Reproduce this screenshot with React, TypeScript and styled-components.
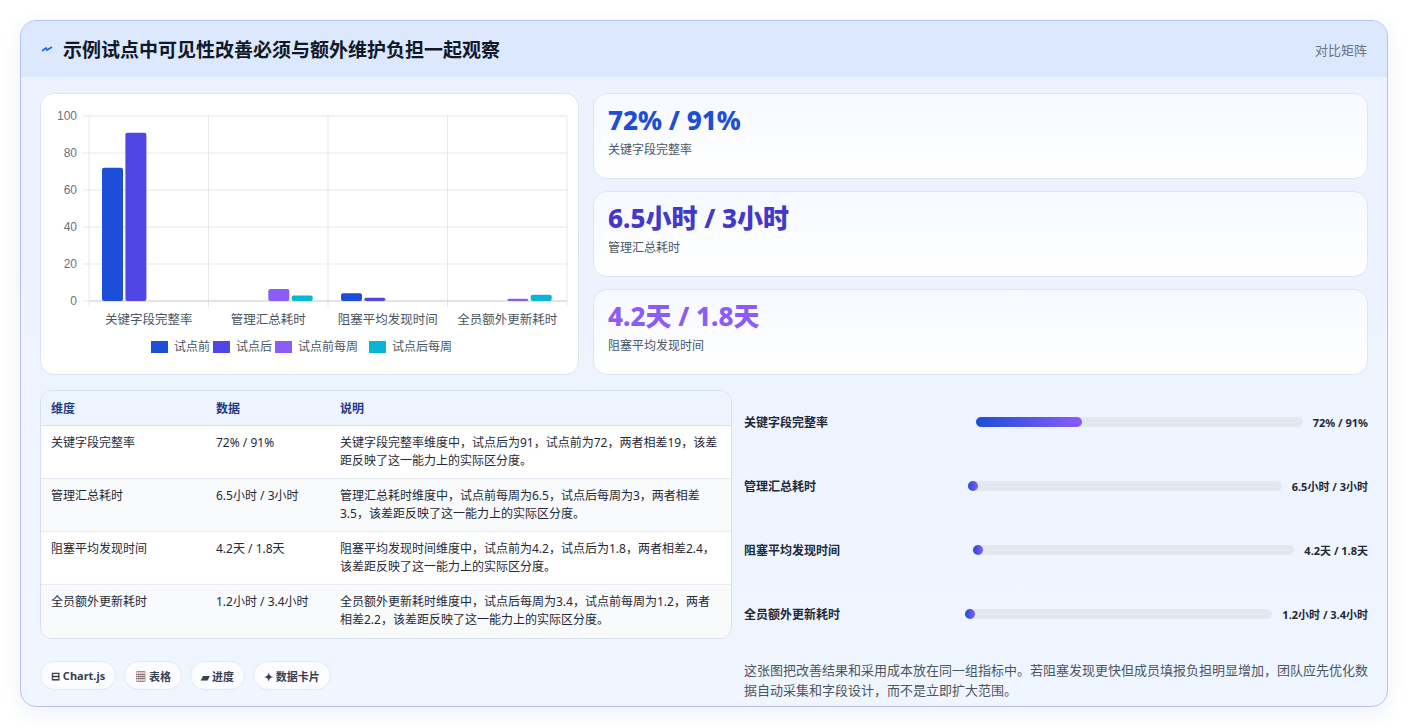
import React from "react";
import styled, { createGlobalStyle } from "styled-components";

const Global = createGlobalStyle`
  html, body { margin: 0; padding: 0; background: #ffffff; }
  body { font-family: "Noto Sans", "Noto Sans CJK SC", sans-serif; }
  * { box-sizing: border-box; }
`;

const Page = styled.div`
  padding: 20px 20px 21px 20px;
  height: 728px;
`;

const Card = styled.div`
  height: 687px;
  border: 1px solid #b6c2f0;
  border-radius: 16px;
  background: linear-gradient(180deg, #ecf2fe 0%, #f0f6ff 100%);
  overflow: hidden;
  display: flex;
  flex-direction: column;
  box-shadow: 0 6px 20px rgba(30, 64, 175, 0.08);
`;

const Header = styled.div`
  flex: 0 0 56px;
  height: 56px;
  background: #dbe8fe;
  display: flex;
  align-items: center;
  justify-content: space-between;
  padding: 0 20px 0 20px;
`;

const Title = styled.h1`
  margin: 0;
  display: flex;
  align-items: center;
  gap: 10px;
  font-size: 19px;
  font-weight: 700;
  color: #111827;
`;

const Tag = styled.span`
  font-size: 13px;
  color: #6b7280;
`;

const Body = styled.div`
  flex: 1;
  padding: 16px 19px 0 19px;
  display: flex;
  flex-direction: column;
  gap: 15px;
`;

const TopRow = styled.div`
  display: grid;
  grid-template-columns: 539px 1fr;
  column-gap: 14px;
  height: 282px;
`;

const BottomRow = styled.div`
  display: grid;
  grid-template-columns: 692px 1fr;
  column-gap: 0;
`;

const Panel = styled.div`
  background: #ffffff;
  border: 1px solid #dde5f3;
  border-radius: 14px;
`;

const ChartPanel = styled(Panel)`
  padding: 10px 8px 0 0;
`;

const Stats = styled.div`
  display: flex;
  flex-direction: column;
  gap: 12px;
`;

const Stat = styled(Panel)`
  flex: 1;
  padding: 10px 14px;
  background: linear-gradient(180deg, #f6f9ff 0%, #ffffff 100%);
`;

const StatValue = styled.div<{ $c: string }>`
  font-size: 26px;
  font-weight: 800;
  color: ${(p) => p.$c};
  line-height: 32px;
`;

const StatLabel = styled.div`
  font-size: 12px;
  color: #4b5563;
  margin-top: 4px;
`;

const Left = styled.div`
  display: flex;
  flex-direction: column;
  gap: 22px;
`;

const Table = styled.table`
  width: 100%;
  border-collapse: separate;
  border-spacing: 0;
  border: 1px solid #d7dfee;
  border-radius: 12px;
  overflow: hidden;
  font-size: 12px;
  background: #fff;
`;

const Th = styled.th`
  text-align: left;
  font-weight: 700;
  color: #1e3a8a;
  background: #eef4fe;
  padding: 8px 10px;
  height: 33px;
  border-bottom: 1px solid #d7dfee;
`;

const Tr = styled.tr<{ $alt: boolean }>`
  background: ${(p) => (p.$alt ? "#f8fafc" : "#ffffff")};
  td { border-bottom: 1px solid #e5eaf3; }
  &:last-child td { border-bottom: none; }
`;

const Td = styled.td`
  padding: 8px 10px;
  height: 53px;
  vertical-align: top;
  color: #1f2937;
  line-height: 18px;
`;

const Chips = styled.div`
  display: flex;
  gap: 8px;
`;

const Chip = styled.span`
  display: inline-flex;
  align-items: center;
  gap: 4px;
  height: 29px;
  padding: 0 10px;
  border-radius: 15px;
  border: 1px solid #e2e8f0;
  background: #fbfcff;
  font-size: 11px;
  font-weight: 700;
  color: #374151;
`;

const Right = styled.div`
  display: flex;
  flex-direction: column;
`;

const Bars = styled.div`
  display: flex;
  flex-direction: column;
`;

const BarRow = styled.div`
  height: 64px;
  display: flex;
  align-items: center;
  gap: 10px;
  padding: 0 0 0 12px;
  font-size: 11px;
  font-weight: 700;
  color: #1f2937;
`;

const BarLabel = styled.span<{ $w: number }>`
  width: ${(p) => p.$w}px;
  font-size: 12px;
`;

const Track = styled.div`
  flex: 1;
  height: 10px;
  border-radius: 5px;
  background: #e2e8f0;
`;

const Fill = styled.div`
  height: 100%;
  border-radius: 5px;
  min-width: 10px;
  background: linear-gradient(90deg, #1d4ed8, #8b5cf6);
`;

const Note = styled.p`
  margin: 14px 0 0 12px;
  font-size: 13px;
  line-height: 20px;
  color: #4b5563;
`;

const colors = ["#1d4ed8", "#4f46e5", "#8b5cf6", "#06b6d4"];
const cats = ["关键字段完整率", "管理汇总耗时", "阻塞平均发现时间", "全员额外更新耗时"];
const data: (number | null)[][] = [
  [72, 91, null, null],
  [null, null, 6.5, 3],
  [4.2, 1.8, null, null],
  [null, null, 1.2, 3.4],
];
const legend = ["试点前", "试点后", "试点前每周", "试点后每周"];

function Chart() {
  const x0 = 48, top = 12, bottom = 197, w = 478;
  const cw = w / 4;
  const y = (v: number) => bottom - (v / 100) * (bottom - top);
  return (
    <svg width="530" height="270" style={{ display: "block" }}>
      {[0, 20, 40, 60, 80, 100].map((t) => (
        <g key={t}>
          <line x1={x0 - 6} x2={x0 + w} y1={y(t)} y2={y(t)} stroke="#e5e7eb" />
          <text x={x0 - 12} y={y(t) + 4} fontSize="12" textAnchor="end" fill="#6b7280" fontFamily="Liberation Sans, sans-serif">{t}</text>
        </g>
      ))}
      {[0, 1, 2, 3, 4].map((i) => (
        <line key={i} x1={x0 + i * cw} x2={x0 + i * cw} y1={top} y2={bottom + 6} stroke="#e5e7eb" />
      ))}
      <line x1={x0} x2={x0 + w} y1={bottom} y2={bottom} stroke="#d1d5db" />
      {data.map((row, ci) =>
        row.map((v, si) =>
          v == null ? null : (
            <rect key={ci + "-" + si} x={x0 + ci * cw + 13 + si * 23.4} y={y(v)} width={21} height={bottom - y(v)} rx={2} fill={colors[si]} />
          )
        )
      )}
      {cats.map((c, i) => (
        <text key={c} x={x0 + i * cw + cw / 2} y={bottom + 23} fontSize="12.5" textAnchor="middle" fill="#4b5563">{c}</text>
      ))}
      {(() => {
        const widths = [62, 62, 94, 84];
        let x = 110;
        return legend.map((l, i) => {
          const g = (
            <g key={l}>
              <rect x={x} y={237} width={17} height={12} fill={colors[i]} />
              <text x={x + 23} y={247} fontSize="12" fill="#4b5563">{l}</text>
            </g>
          );
          x += widths[i];
          return g;
        });
      })()}
    </svg>
  );
}

const rows = [
  ["关键字段完整率", "72% / 91%", "关键字段完整率维度中，试点后为91，试点前为72，两者相差19，该差距反映了这一能力上的实际区分度。"],
  ["管理汇总耗时", "6.5小时 / 3小时", "管理汇总耗时维度中，试点前每周为6.5，试点后每周为3，两者相差3.5，该差距反映了这一能力上的实际区分度。"],
  ["阻塞平均发现时间", "4.2天 / 1.8天", "阻塞平均发现时间维度中，试点前为4.2，试点后为1.8，两者相差2.4，该差距反映了这一能力上的实际区分度。"],
  ["全员额外更新耗时", "1.2小时 / 3.4小时", "全员额外更新耗时维度中，试点后每周为3.4，试点前每周为1.2，两者相差2.2，该差距反映了这一能力上的实际区分度。"],
];

const bars = [
  { l: "关键字段完整率", v: "72% / 91%", p: 32.5, w: 222 },
  { l: "管理汇总耗时", v: "6.5小时 / 3小时", p: 0, w: 214 },
  { l: "阻塞平均发现时间", v: "4.2天 / 1.8天", p: 0, w: 219 },
  { l: "全员额外更新耗时", v: "1.2小时 / 3.4小时", p: 0, w: 211 },
];

export default function App() {
  return (
    <Page>
      <Global />
      <Card>
        <Header>
          <Title>
            <svg width="12" height="10" viewBox="0 0 12 10">
              <path d="M1 7 L5 4 L6 6 L11 3" stroke="#2563eb" strokeWidth="1.6" fill="none" />
            </svg>
            示例试点中可见性改善必须与额外维护负担一起观察
          </Title>
          <Tag>对比矩阵</Tag>
        </Header>
        <Body>
          <TopRow>
            <ChartPanel>
              <Chart />
            </ChartPanel>
            <Stats>
              <Stat>
                <StatValue $c="#1d4ed8">72% / 91%</StatValue>
                <StatLabel>关键字段完整率</StatLabel>
              </Stat>
              <Stat>
                <StatValue $c="#4338ca">6.5小时 / 3小时</StatValue>
                <StatLabel>管理汇总耗时</StatLabel>
              </Stat>
              <Stat>
                <StatValue $c="#8b5cf6">4.2天 / 1.8天</StatValue>
                <StatLabel>阻塞平均发现时间</StatLabel>
              </Stat>
            </Stats>
          </TopRow>
          <BottomRow>
            <Left>
              <Table>
                <thead>
                  <tr>
                    <Th style={{ width: 165 }}>维度</Th>
                    <Th style={{ width: 124 }}>数据</Th>
                    <Th>说明</Th>
                  </tr>
                </thead>
                <tbody>
                  {rows.map((r, i) => (
                    <Tr key={r[0]} $alt={i % 2 === 1}>
                      <Td>{r[0]}</Td>
                      <Td>{r[1]}</Td>
                      <Td>{r[2]}</Td>
                    </Tr>
                  ))}
                </tbody>
              </Table>
              <Chips>
                <Chip>⊟ Chart.js</Chip>
                <Chip>▦ 表格</Chip>
                <Chip>▰ 进度</Chip>
                <Chip>✦ 数据卡片</Chip>
              </Chips>
            </Left>
            <Right>
              <Bars>
                {bars.map((b) => (
                  <BarRow key={b.l}>
                    <BarLabel $w={b.w}>{b.l}</BarLabel>
                    <Track>
                      <Fill style={{ width: b.p + "%" }} />
                    </Track>
                    <span>{b.v}</span>
                  </BarRow>
                ))}
              </Bars>
              <Note>这张图把改善结果和采用成本放在同一组指标中。若阻塞发现更快但成员填报负担明显增加，团队应先优化数据自动采集和字段设计，而不是立即扩大范围。</Note>
            </Right>
          </BottomRow>
        </Body>
      </Card>
    </Page>
  );
}
